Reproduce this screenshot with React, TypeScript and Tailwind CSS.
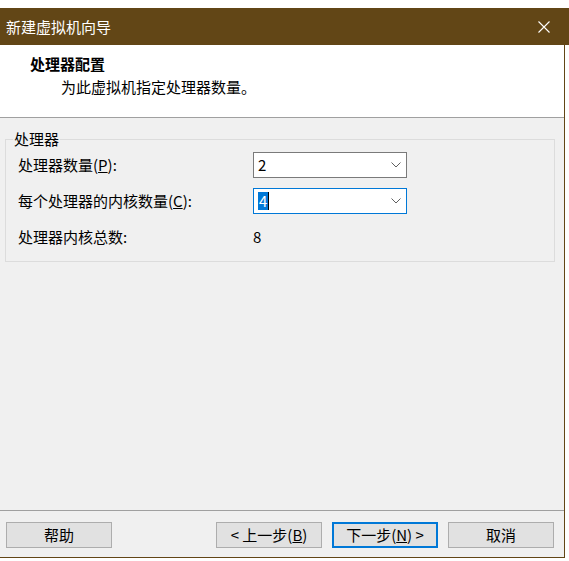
import React from 'react';

const font = "font-['Noto_Sans_CJK_SC','Noto_Sans',sans-serif]";

function Chevron() {
  return (
    <svg width="10" height="6" viewBox="0 0 10 6" className="shrink-0">
      <path d="M0.5 0.5 L5 5 L9.5 0.5" fill="none" stroke="#606060" strokeWidth="1" />
    </svg>
  );
}

function Combo({ value, focused }: { value: string; focused?: boolean }) {
  return (
    <div
      className={
        focused
          ? 'flex h-[26px] w-[154px] items-center justify-between border border-[#0078d7] bg-white pl-[4px] pr-[5px]'
          : 'flex h-[26px] w-[154px] items-center justify-between border border-[#7a7a7a] bg-white pl-[4px] pr-[5px]'
      }
    >
      {focused ? (
        <span className="flex h-[18px] items-center">
          <span className="bg-[#0078d7] px-[1px] text-[15px] leading-[18px] text-white">{value}</span>
          <span className="h-[18px] w-[1px] bg-black" />
        </span>
      ) : (
        <span className="text-[15px] leading-[18px] text-black">{value}</span>
      )}
      <Chevron />
    </div>
  );
}

function WizardButton({ children, primary }: { children: React.ReactNode; primary?: boolean }) {
  return (
    <button
      type="button"
      className={
        primary
          ? 'flex h-[26px] w-[106px] items-center justify-center border-2 border-[#0078d7] bg-[#e1e1e1] text-[15px] leading-[20px] text-black'
          : 'flex h-[26px] w-[106px] items-center justify-center border border-[#adadad] bg-[#e1e1e1] text-[15px] leading-[20px] text-black'
      }
    >
      {children}
    </button>
  );
}

export default function App() {
  return (
    <div className={`h-[561px] w-[569px] overflow-hidden bg-white pt-[8px] ${font}`}>
      {/* title bar */}
      <div className="flex h-[37px] items-center justify-between bg-[#624616] pl-[6px] pr-[19px]">
        <span className="text-[15px] leading-[20px] text-white">新建虚拟机向导</span>
        <svg width="12" height="12" viewBox="0 0 12 12">
          <path d="M0.5 0.5 L11.5 11.5 M11.5 0.5 L0.5 11.5" stroke="#ffffff" strokeWidth="1.1" />
        </svg>
      </div>

      <div className="flex h-[513px] w-[565px] flex-col border-b border-r border-[#624616] bg-[#f0f0f0]">
        {/* header */}
        <div className="h-[73px] shrink-0 border-b border-[#a0a0a0] bg-white pt-[9px]">
          <div className="pl-[30px] text-[15px] font-bold leading-[20px] text-black">处理器配置</div>
          <div className="mt-[3px] pl-[61px] text-[15px] leading-[20px] text-black">为此虚拟机指定处理器数量。</div>
        </div>

        {/* body */}
        <div className="flex-1 pl-[5px] pr-[9px] pt-[21px]">
          <div className="relative h-[123px] border border-[#dcdcdc]">
            <span className="absolute -top-[11px] left-[7px] bg-[#f0f0f0] px-[1px] text-[15px] leading-[20px] text-black">
              处理器
            </span>
            <div className="grid grid-cols-[235px_1fr] items-center gap-y-[10px] pl-[12px] pt-[12px]">
              <span className="text-[15px] leading-[20px] text-black">
                处理器数量(<span className="underline">P</span>):
              </span>
              <Combo value="2" />
              <span className="text-[15px] leading-[20px] text-black">
                每个处理器的内核数量(<span className="underline">C</span>):
              </span>
              <Combo value="4" focused />
              <span className="flex h-[26px] items-center text-[15px] leading-[20px] text-black">处理器内核总数:</span>
              <span className="flex h-[26px] items-center text-[15px] leading-[20px] text-black">8</span>
            </div>
          </div>
        </div>

        {/* footer */}
        <div className="flex h-[47px] shrink-0 items-start border-t border-[#a0a0a0] pl-[6px] pt-[11px]">
          <WizardButton>帮助</WizardButton>
          <div className="ml-[104px] flex gap-[10px]">
            <WizardButton>
              &lt; 上一步(<span className="underline">B</span>)
            </WizardButton>
            <WizardButton primary>
              下一步(<span className="underline">N</span>) &gt;
            </WizardButton>
            <WizardButton>取消</WizardButton>
          </div>
        </div>
      </div>
    </div>
  );
}
